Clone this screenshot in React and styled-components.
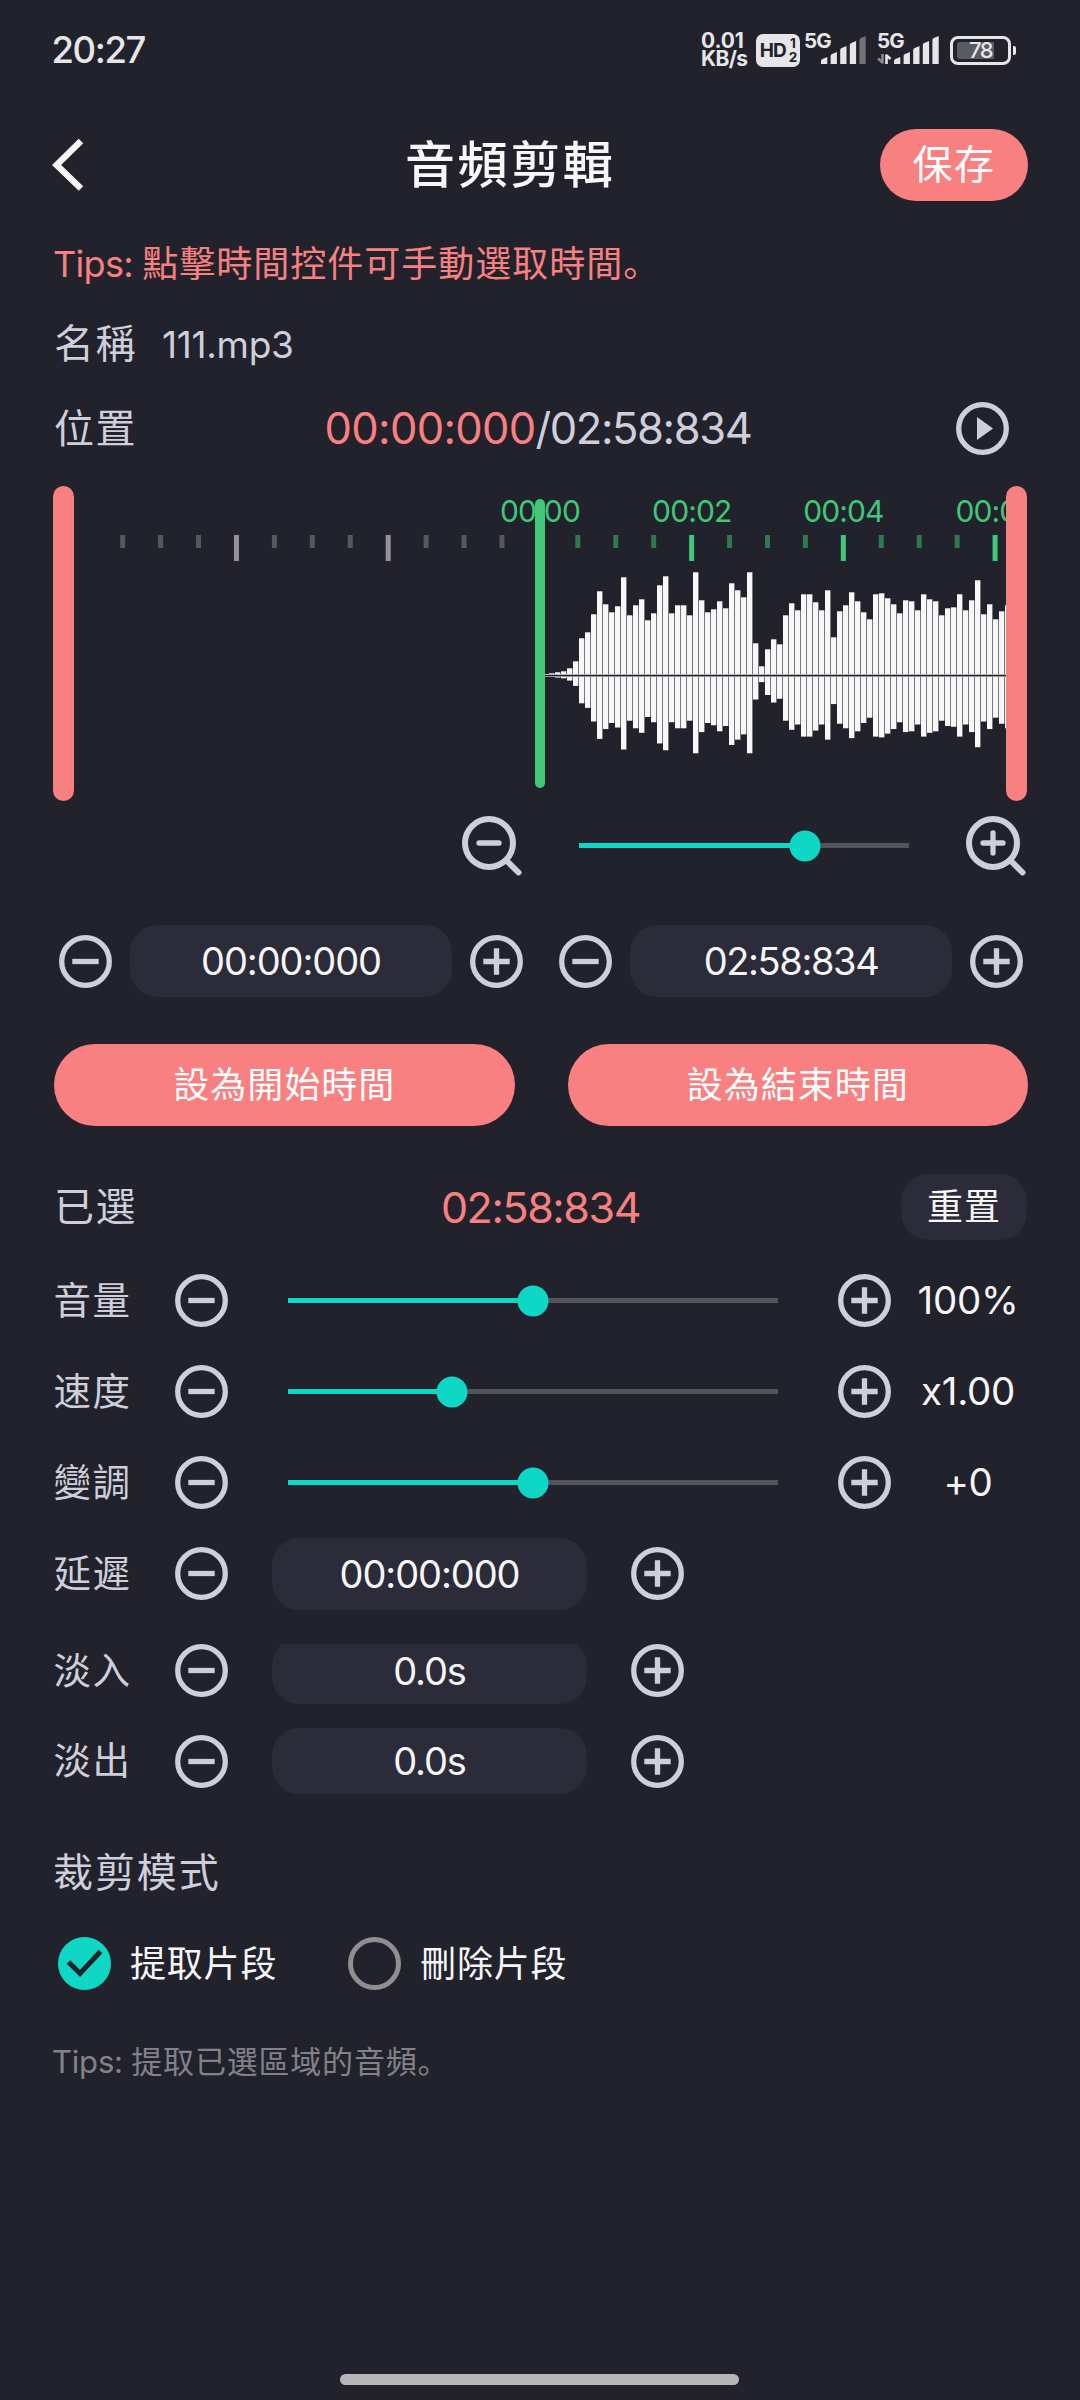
import { useState } from "react";
import styled, { createGlobalStyle } from "styled-components";

const peaks = [
  1, 2, 3, 4, 7, 14, 37, 43, 61, 84, 71, 63, 69, 98, 60, 70, 76, 55, 62, 90, 99,
  62, 70, 70, 60, 103, 75, 63, 66, 74, 67, 92, 85, 78, 103, 32, 9, 26, 36, 31,
  60, 72, 65, 81, 81, 73, 65, 85, 38, 64, 70, 83, 74, 63, 56, 81, 82, 77, 71,
  62, 75, 74, 65, 81, 76, 74, 60, 67, 68, 81, 65, 75, 95, 61, 71, 56, 64, 70,
];

const TICK_GAP = 37.93;
const ticks = Array.from({ length: 24 }, (_, i) => i - 11);
const times = ["00:00", "00:02", "00:04", "00:06"];

const MinusButton = () => (
  <IconButton>
    <svg width="53" height="53" viewBox="0 0 53 53">
      <circle cx="26.5" cy="26.5" r="23.8" />
      <path d="M13.3 26.5h26.4" />
    </svg>
  </IconButton>
);

const PlusButton = () => (
  <IconButton>
    <svg width="53" height="53" viewBox="0 0 53 53">
      <circle cx="26.5" cy="26.5" r="23.8" />
      <path d="M13.3 26.5h26.4M26.5 13.3v26.4" />
    </svg>
  </IconButton>
);

const ZoomIcon = ({ plus }) => (
  <IconButton>
    <svg width="60" height="60" viewBox="0 0 60 60">
      <circle cx="27" cy="27" r="24" strokeWidth="6" />
      <path
        d={plus ? "M17 27h20M27 17v20" : "M17 27h20"}
        strokeLinecap="round"
      />
      <path d="M44.5 44.5l12 12" strokeWidth="6" strokeLinecap="round" />
    </svg>
  </IconButton>
);

const Signal = ({ weak, data }) => (
  <SignalBox>
    <span>5G</span>
    <svg width="64" height="34" viewBox="0 0 64 34">
      {data && (
        <g strokeWidth="2.6" fill="none">
          <path d="M5.5 21v9.5M1 25.5l4.5 4" stroke="#8a8a8f" />
          <path d="M9.5 31v-9.5M9 22l4.5 4" stroke="#e6e6e8" />
        </g>
      )}
      {[7, 12, 18, 23, 28].map((h, i) => (
        <path
          key={i}
          d={`M${17 + i * 9.6} 31v${-(h - 4)}q0 -1.5 1.5 -2l4.8 -2v${h}z`}
          fill={weak && i === 4 ? "#717176" : "#e6e6e8"}
        />
      ))}
    </svg>
  </SignalBox>
);

const Slider = ({ value, width }) => (
  <Rail $width={width}>
    <Fill style={{ width: `${value}%` }} />
    <Thumb style={{ left: `${value}%` }} />
  </Rail>
);

const Waveform = () => (
  <Track>
    <svg width="932" height="315" viewBox="74 486 932 315">
      {ticks.map((k) => {
        const long = k % 4 === 0;
        const color =
          k < 0 ? (long ? "#929297" : "#57575f") : long ? "#40c878" : "#30794f";
        return (
          <rect
            key={k}
            x={537.4 + k * TICK_GAP}
            y="535"
            width="5"
            height={long ? 26 : 13}
            fill={color}
          />
        );
      })}
      {times.map((t, i) => (
        <TimeMark key={t} x={540 + i * 4 * TICK_GAP} y="522">
          {t}
        </TimeMark>
      ))}
      {peaks.map((p, i) => (
        <rect
          key={i}
          x={543 + i * 6}
          y={675.3 - p}
          width="5.4"
          height={p * 1.757}
          fill="#f8f8f8"
        />
      ))}
      <rect x="545" y="674" width="461" height="3" fill="#b5b5b9" />
      <rect x="545" y="675" width="461" height="1.2" fill="#21222b" />
    </svg>
    <Playhead />
  </Track>
);

const Radio = ({ checked }) => (
  <svg width="53" height="53" viewBox="0 0 53 53" fill="none">
    {checked ? (
      <>
        <circle cx="26.5" cy="26.5" r="26.5" fill="#0ed7c6" />
        <path d="M10.5 25l11.5 11.5L42.5 14.5" stroke="#21222b" strokeWidth="5" />
      </>
    ) : (
      <circle cx="26.5" cy="26.5" r="24" stroke="#8f8f8f" strokeWidth="5" />
    )}
  </svg>
);

const App = () => {
  const [mode, setMode] = useState("extract");

  return (
    <Screen>
      <GlobalStyle />
      <StatusBar>
        <Clock>20:27</Clock>
        <Speed>
          <span>0.01</span>
          <span>KB/s</span>
        </Speed>
        <HdBadge>
          HD
          <small>
            <span>1</span>
            <span>2</span>
          </small>
        </HdBadge>
        <Signal weak />
        <Signal data />
        <Battery>
          <span>78</span>
        </Battery>
      </StatusBar>

      <Header>
        <Back>
          <svg width="34" height="54" viewBox="0 0 34 54">
            <path
              d="M29 3L4.6 27L29 50.5"
              fill="none"
              stroke="#f7f7f8"
              strokeWidth="6.4"
            />
          </svg>
        </Back>
        <Title>音頻剪輯</Title>
        <Save>保存</Save>
      </Header>

      <TopTip>
        <span>Tips: </span>點擊時間控件可手動選取時間。
      </TopTip>
      <NameRow>
        <Label>名稱</Label>
        <FileName>111.mp3</FileName>
      </NameRow>
      <PositionRow>
        <Label>位置</Label>
        <Position>
          <em>00:00:000</em>/02:58:834
        </Position>
        <IconButton>
          <svg width="53" height="53" viewBox="0 0 53 53">
            <circle cx="26.5" cy="26.5" r="23.8" />
            <path d="M21 15v23l16-11.5z" fill="#cfcfdb" stroke="none" />
          </svg>
        </IconButton>
      </PositionRow>

      <WaveRow>
        <Handle />
        <Waveform />
        <Handle />
      </WaveRow>

      <ZoomRow>
        <ZoomIcon />
        <Slider value={68.6} width={330} />
        <ZoomIcon plus />
      </ZoomRow>

      <RangeRow>
        <Stepper>
          <MinusButton />
          <Field $width={322}>00:00:000</Field>
          <PlusButton />
        </Stepper>
        <Stepper>
          <MinusButton />
          <Field $width={322} $tight>
            02:58:834
          </Field>
          <PlusButton />
        </Stepper>
      </RangeRow>

      <Actions>
        <Action>設為開始時間</Action>
        <Action>設為結束時間</Action>
      </Actions>

      <SelectedRow>
        <Label>已選</Label>
        <Selected>02:58:834</Selected>
        <Reset>重置</Reset>
      </SelectedRow>

      <Controls>
        <Control>
          <ControlLabel>音量</ControlLabel>
          <MinusButton />
          <Slider value={50} width={490} />
          <PlusButton />
          <Value>100%</Value>
        </Control>
        <Control>
          <ControlLabel>速度</ControlLabel>
          <MinusButton />
          <Slider value={33.4} width={490} />
          <PlusButton />
          <Value>x1.00</Value>
        </Control>
        <Control>
          <ControlLabel>變調</ControlLabel>
          <MinusButton />
          <Slider value={50} width={490} />
          <PlusButton />
          <Value>+0</Value>
        </Control>
        <Control $field>
          <ControlLabel>延遲</ControlLabel>
          <MinusButton />
          <Field>00:00:000</Field>
          <PlusButton />
        </Control>
      </Controls>

      <FadeIn>
        <Control $field $height={67}>
          <ControlLabel>淡入</ControlLabel>
          <MinusButton />
          <Field $height={66}>0.0s</Field>
          <PlusButton />
        </Control>
      </FadeIn>
      <FadeOut>
        <Control $field $height={66}>
          <ControlLabel>淡出</ControlLabel>
          <MinusButton />
          <Field $height={66}>0.0s</Field>
          <PlusButton />
        </Control>
      </FadeOut>

      <ModeTitle>裁剪模式</ModeTitle>
      <Modes>
        <Option onClick={() => setMode("extract")}>
          <Radio checked={mode === "extract"} />
          提取片段
        </Option>
        <Option onClick={() => setMode("delete")}>
          <Radio checked={mode === "delete"} />
          刪除片段
        </Option>
      </Modes>
      <BottomTip>
        <span>Tips: </span>提取已選區域的音頻。
      </BottomTip>
      <HomeBar />
    </Screen>
  );
};

const GlobalStyle = createGlobalStyle`
  * {
    box-sizing: border-box;
  }
  body {
    margin: 0;
    background: #21222b;
  }
  button {
    border: none;
    background: none;
    padding: 0;
    margin: 0;
    color: inherit;
    font: inherit;
    letter-spacing: inherit;
  }
  svg {
    display: block;
  }
`;

const Screen = styled.main`
  width: 1080px;
  height: 2400px;
  display: flex;
  flex-direction: column;
  background: #21222b;
  color: #cfcfdb;
  font-family: Inter, "Noto Sans CJK SC", sans-serif;
  line-height: 1;
  white-space: nowrap;
  overflow: hidden;
`;

const StatusBar = styled.div`
  height: 100px;
  padding: 0 64px 0 51.5px;
  display: flex;
  align-items: center;
  color: #e6e6e8;
`;

const Clock = styled.span`
  font-size: 36.5px;
  font-weight: 500;
  letter-spacing: -1.4px;
  margin-right: auto;
`;

const Speed = styled.div`
  width: 55px;
  display: flex;
  flex-direction: column;
  font-size: 21px;
  font-weight: 700;
  line-height: 18px;
  letter-spacing: -0.6px;
  span:first-child {
    letter-spacing: -0.1px;
  }
`;

const HdBadge = styled.div`
  width: 44px;
  height: 33px;
  border-radius: 7px;
  background: #e6e6e8;
  color: #21222b;
  display: flex;
  align-items: center;
  justify-content: center;
  gap: 3px;
  font-size: 19px;
  font-weight: 700;
  letter-spacing: -1px;
  small {
    display: flex;
    flex-direction: column;
    align-items: center;
    font-size: 13.5px;
    line-height: 14px;
  }
`;

const SignalBox = styled.div`
  position: relative;
  width: 64px;
  height: 34px;
  margin-left: 4px;
  & + & {
    margin-left: 9px;
  }
  span {
    position: absolute;
    left: 0;
    top: -2px;
    font-size: 20.5px;
    font-weight: 700;
    letter-spacing: -0.8px;
  }
`;

const Battery = styled.div`
  position: relative;
  width: 61px;
  height: 29px;
  margin-left: 9px;
  margin-right: 5px;
  padding: 3px 4px;
  border: 3px solid #e6e6e8;
  border-radius: 8px;
  span {
    display: block;
    height: 17px;
    border-radius: 3px;
    background: linear-gradient(90deg, #5a5a61 37px, transparent 37px);
    font-size: 22px;
    line-height: 17px;
    font-weight: 500;
    letter-spacing: -1.5px;
    text-align: center;
  }
  &::after {
    content: "";
    position: absolute;
    right: -8px;
    top: 7px;
    width: 3.5px;
    height: 9px;
    border-radius: 0 2px 2px 0;
    background: #e6e6e8;
  }
`;

const Header = styled.header`
  height: 130px;
  padding: 0 52px;
  display: grid;
  grid-template-columns: 353px auto 1fr;
  align-items: center;
`;

const Back = styled.button`
  justify-self: start;
`;

const Title = styled.h1`
  margin: 0;
  font-size: 50px;
  font-weight: 500;
  letter-spacing: 2.6px;
  color: #f8f8f9;
`;

const Save = styled.button`
  justify-self: end;
  width: 148px;
  height: 72px;
  border-radius: 36px;
  background: #f98080;
  color: #fff;
  font-size: 40px;
  letter-spacing: 1.5px;
`;

const TopTip = styled.p`
  margin: 0;
  height: 68px;
  line-height: 68px;
  padding-left: 53px;
  color: #f98080;
  font-size: 36px;
  letter-spacing: 1px;
  span {
    letter-spacing: -0.7px;
  }
`;

const NameRow = styled.div`
  height: 92px;
  padding-left: 54px;
  display: flex;
  align-items: center;
`;

const Label = styled.span`
  font-size: 40px;
  letter-spacing: 1.5px;
`;

const FileName = styled.span`
  margin-left: 25px;
  font-size: 37px;
  letter-spacing: -0.3px;
`;

const PositionRow = styled.div`
  height: 77px;
  padding: 0 71px 0 54px;
  display: flex;
  align-items: center;
  justify-content: space-between;
`;

const Position = styled.div`
  font-size: 43.5px;
  letter-spacing: -1.4px;
  margin-left: 88px;
  margin-right: 105px;
  em {
    font-style: normal;
    letter-spacing: -0.7px;
    color: #f98080;
  }
`;

const IconButton = styled.button`
  flex: none;
  display: flex;
  svg {
    fill: none;
    stroke: #cfcfdb;
    stroke-width: 5.3px;
  }
`;

const WaveRow = styled.div`
  margin: 19px 53px 0;
  height: 315px;
  display: flex;
`;

const Handle = styled.div`
  flex: none;
  width: 21px;
  height: 315px;
  border-radius: 11px;
  background: #f98080;
`;

const Track = styled.div`
  position: relative;
  flex: 1;
  overflow: hidden;
`;

const TimeMark = styled.text`
  fill: #40c878;
  font-size: 30px;
  letter-spacing: -0.9px;
  text-anchor: middle;
`;

const Playhead = styled.div`
  position: absolute;
  left: 461px;
  top: 13px;
  width: 10px;
  height: 289px;
  border-radius: 5px;
  background: #40c878;
`;

const ZoomRow = styled.div`
  height: 89px;
  padding: 0 54px 0 462px;
  display: flex;
  align-items: center;
  justify-content: space-between;
`;

const Rail = styled.div`
  position: relative;
  flex: none;
  width: ${(p) => p.$width}px;
  height: 5px;
  background: #53535b;
`;

const Fill = styled.div`
  height: 5px;
  background: #0ed7c6;
`;

const Thumb = styled.div`
  position: absolute;
  top: 50%;
  width: 31px;
  height: 31px;
  border-radius: 50%;
  background: #0ed7c6;
  transform: translate(-50%, -50%);
`;

const RangeRow = styled.div`
  margin-top: 35px;
  padding: 0 57px 0 59px;
  display: flex;
  justify-content: space-between;
`;

const Stepper = styled.div`
  display: flex;
  align-items: center;
  gap: 18px;
`;

const Field = styled.div`
  width: ${(p) => p.$width || 315}px;
  height: ${(p) => p.$height || 72}px;
  border-radius: 27px;
  background: #2b2b39;
  color: #f6f6f8;
  display: flex;
  align-items: center;
  justify-content: center;
  font-size: 38px;
  letter-spacing: ${(p) => (p.$tight ? "-1.4px" : "-1.1px")};
`;

const Actions = styled.div`
  margin: 47px 52px 0 54px;
  display: flex;
  gap: 53px;
`;

const Action = styled.button`
  flex: 1;
  height: 82px;
  border-radius: 41px;
  background: #f98080;
  color: #fff;
  font-size: 36px;
  letter-spacing: 1px;
`;

const SelectedRow = styled.div`
  margin-top: 48px;
  height: 66px;
  padding: 0 53px 0 54px;
  display: grid;
  grid-template-columns: 1fr auto 1fr;
  align-items: center;
`;

const Selected = styled.span`
  font-size: 43px;
  letter-spacing: -1.4px;
  color: #f98080;
`;

const Reset = styled.button`
  justify-self: end;
  width: 126px;
  height: 66px;
  border-radius: 27px;
  background: #2b2b39;
  color: #f6f6f8;
  font-size: 36px;
  letter-spacing: 1px;
`;

const Controls = styled.div`
  margin-top: 15px;
`;

const Control = styled.div`
  height: ${(p) => p.$height || 91}px;
  padding-left: 53.5px;
  display: grid;
  align-items: center;
  grid-template-columns: ${(p) =>
    p.$field ? "121px 97.5px 358.5px 53px" : "121px 113.5px 550px 53px 154px"};
`;

const ControlLabel = styled.span`
  font-size: 37.5px;
  letter-spacing: 1.5px;
`;

const Value = styled.span`
  text-align: center;
  font-size: 38.5px;
  letter-spacing: -0.3px;
  color: #f6f6f8;
`;

const FadeIn = styled.div`
  margin-top: 25px;
  height: 60px;
  display: flex;
  align-items: flex-end;
  overflow: hidden;
`;

const FadeOut = styled.div`
  margin-top: 24px;
`;

const ModeTitle = styled.h2`
  margin: 49px 0 0 53px;
  height: 60px;
  line-height: 60px;
  font-size: 40px;
  font-weight: 400;
  letter-spacing: 1.9px;
`;

const Modes = styled.div`
  margin-top: 34px;
  padding-left: 58px;
  display: flex;
  gap: 71px;
`;

const Option = styled.button`
  display: flex;
  align-items: center;
  gap: 19px;
  color: #f6f6f8;
  font-size: 36px;
  letter-spacing: 0.8px;
`;

const BottomTip = styled.p`
  margin: 52px 0 0 52px;
  height: 40px;
  line-height: 40px;
  font-size: 31px;
  letter-spacing: 0.8px;
  color: #828289;
  span {
    letter-spacing: -0.2px;
  }
`;

const HomeBar = styled.div`
  margin: auto 341px 15px 340px;
  height: 11px;
  border-radius: 6px;
  background: #b6b6b8;
`;

export default App;
